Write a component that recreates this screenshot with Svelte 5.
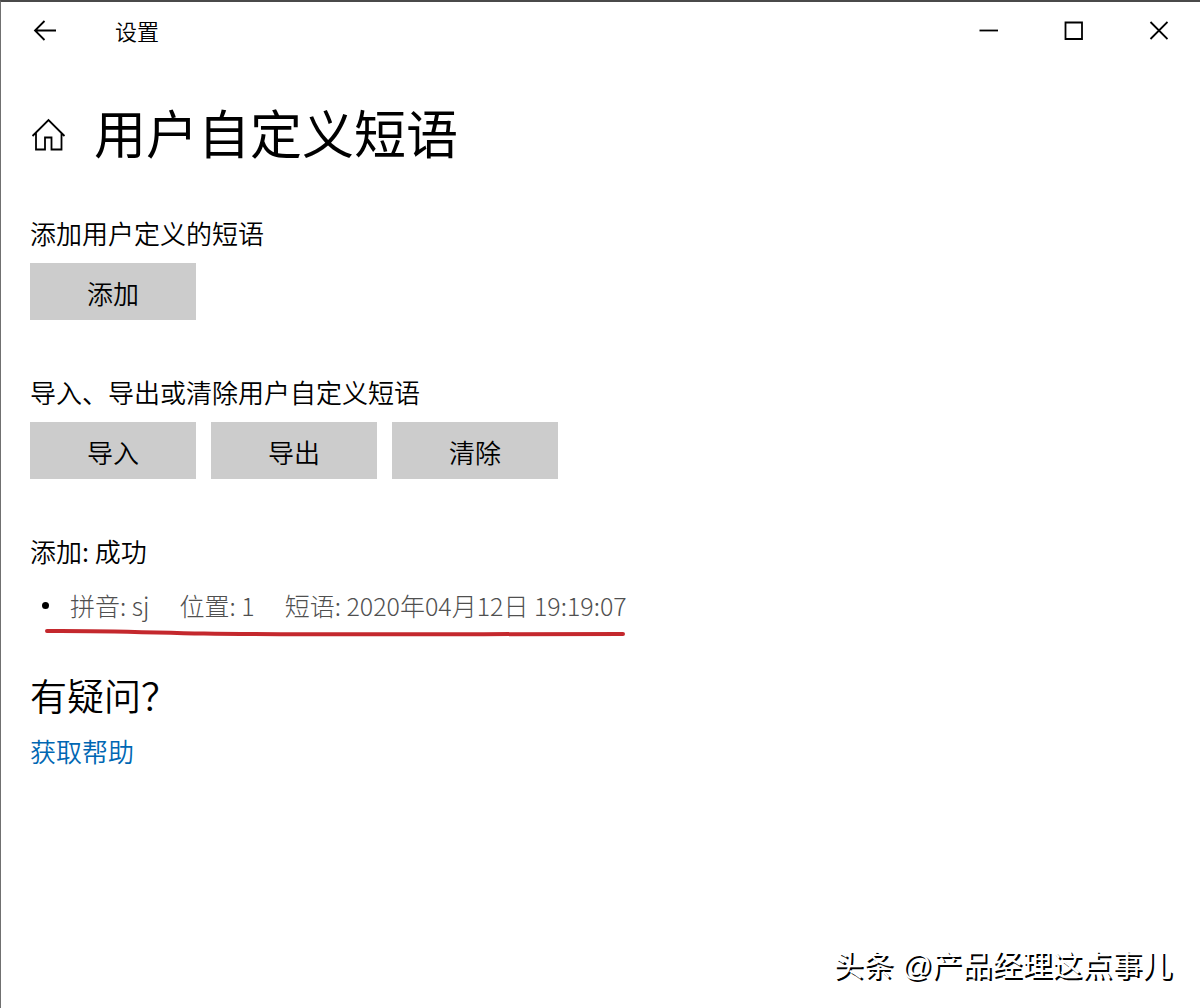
<script>
    // buttons of the import / export section
    const actions = ['导入', '导出', '清除'];

    let result = {
        pinyin: 'sj',
        position: 1,
        phrase: '2020年04月12日 19:19:07'
    };
</script>

<div class="window">
    <header class="titlebar">
        <button class="iconButton back" aria-label="返回">
            <svg width="24" height="24" viewBox="0 0 24 24">
                <path d="M23 12.500H2M11.500 3L2 12.500L11.500 22" />
            </svg>
        </button>
        <span class="appName">设置</span>
        <div class="windowControls">
            <button class="iconButton" aria-label="最小化">
                <svg width="20" height="20" viewBox="0 0 20 20"><path d="M1.500 10.500H20" /></svg>
            </button>
            <button class="iconButton" aria-label="最大化">
                <svg width="20" height="20" viewBox="0 0 20 20"><path d="M2.500 2.500H19V19H2.500Z" /></svg>
            </button>
            <button class="iconButton" aria-label="关闭">
                <svg width="20" height="20" viewBox="0 0 20 20"><path d="M2.500 2L19.500 19M19.500 2L2.500 19" /></svg>
            </button>
        </div>
    </header>

    <main>
        <div class="pageTitle">
            <svg class="home" width="36" height="36" viewBox="0 0 36 36">
                <path d="M2.500 19L18.500 3L34.500 19M6 16V32.500H15V20.500H21.500V32.500H31.500V16" />
            </svg>
            <h1>用户自定义短语</h1>
        </div>

        <section>
            <p>添加用户定义的短语</p>
            <div class="buttonRow">
                <button class="action">添加</button>
            </div>
        </section>

        <section>
            <p>导入、导出或清除用户自定义短语</p>
            <div class="buttonRow">
                {#each actions as action}
                    <button class="action">{action}</button>
                {/each}
            </div>
        </section>

        <section class="result">
            <p>添加: 成功</p>
            <ul>
                <li>
                    <span>拼音: {result.pinyin}</span>
                    <span>位置: {result.position}</span>
                    <span>短语: {result.phrase}</span>
                </li>
            </ul>
            <!-- hand drawn underline -->
            <svg class="underline" width="584" height="10" viewBox="0 0 584 10">
                <path d="M3 3C50 2.500 90 4 160 5.500C260 7 420 6 579 6" />
            </svg>
        </section>

        <section class="help">
            <h2>有疑问？</h2>
            <a href="#help">获取帮助</a>
        </section>
    </main>

    <footer>头条 @产品经理这点事儿</footer>
</div>

<style>
    :global(body) {
        margin: 0;
        background: #fff;
    }

    .window {
        display: flex;
        flex-direction: column;
        min-height: 100vh;
        box-sizing: border-box;
        border-top: 2px solid #4a4a4a;
        border-left: 1px solid #707070;
        color: #000;
        font-family: "Noto Sans CJK SC", sans-serif;
        font-size: 26px;
        font-weight: 350;
        line-height: 36px;
    }

    .titlebar {
        display: flex;
        align-items: center;
        height: 56px;
        padding-left: 24px;
    }

    .iconButton {
        display: flex;
        align-items: center;
        justify-content: center;
        height: 56px;
        width: 85px;
        padding: 0;
        border: 0;
        background: none;
    }

    .iconButton.back {
        width: 40px;
    }

    svg {
        fill: none;
        stroke: #000;
        stroke-width: 1.8;
    }

    .appName {
        margin-left: 50px;
        font-size: 22px;
    }

    .windowControls {
        display: flex;
        margin-left: auto;
    }

    main {
        flex: 1;
        padding: 39px 29px 0;
    }

    .pageTitle {
        display: flex;
        align-items: center;
        gap: 28px;
        margin-bottom: 42px;
    }

    h1,
    h2,
    p,
    ul {
        margin: 0;
        padding: 0;
        font-weight: 350;
    }

    h1 {
        padding-bottom: 6px;
        font-size: 52px;
        font-weight: 400;
        line-height: 70px;
    }

    section {
        margin-bottom: 54px;
    }

    .buttonRow {
        display: flex;
        gap: 15px;
        margin-top: 12px;
    }

    .action {
        width: 166px;
        height: 57px;
        padding: 3px 0 0;
        border: 0;
        background: #ccc;
        color: #000;
        font: inherit;
    }

    .result {
        margin-bottom: 33px;
    }

    ul {
        margin-top: 18px;
        list-style: none;
    }

    li {
        display: flex;
        align-items: center;
        gap: 30px;
        padding-left: 12px;
        color: #505050;
        font-size: 25px;
        font-weight: 300;
    }

    li::before {
        content: "";
        width: 7px;
        height: 7px;
        margin-right: -9px;
        border-radius: 50%;
        background: #000;
    }

    .underline {
        display: block;
        margin: 5px 0 0 14px;
        stroke: #c4282d;
        stroke-width: 4;
        stroke-linecap: round;
    }

    h2 {
        margin-bottom: 14px;
        font-size: 37px;
        line-height: 48px;
    }

    a {
        color: #0067b3;
        text-decoration: none;
    }

    footer {
        padding: 0 28px 24px;
        color: #fff;
        font-family: "Liberation Sans", "Noto Sans CJK SC", sans-serif;
        font-size: 30px;
        font-weight: 400;
        text-align: right;
        text-shadow: 2px 2px 0 #000;
    }
</style>
